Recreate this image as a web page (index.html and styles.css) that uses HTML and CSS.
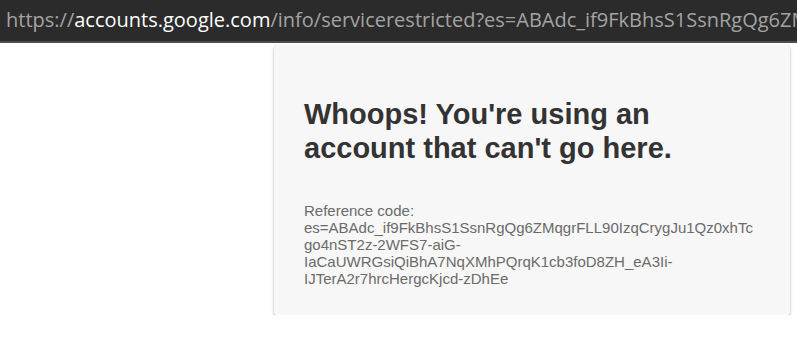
FILE: index.html
```html
<!DOCTYPE html>
<html>
<head>
<meta charset="utf-8">
<link rel="stylesheet" href="styles.css">
</head>
<body>
<div class="urlbar"><span class="dim">https://</span><span class="host">accounts.google.com</span><span class="dim">/info/servicerestricted?es=ABAdc_if9FkBhsS1SsnRgQg6ZMqgrFLL90IzqCrygJu1Qz0xhTcgo4nST2z</span></div>
<main class="page">
  <section class="card">
    <h1 class="title">Whoops! You're using an account that can't go here.</h1>
    <p class="ref">Reference code:<br>es=ABAdc_if9FkBhsS1SsnRgQg6ZMqgrFLL90IzqCrygJu1Qz0xhTcgo4nST2z-2WFS7-aiG-IaCaUWRGsiQiBhA7NqXMhPQrqK1cb3foD8ZH_eA3Ii-IJTerA2r7hrcHergcKjcd-zDhEe</p>
  </section>
</main>
</body>
</html>
```
FILE: styles.css
```css
html, body {
  margin: 0;
  padding: 0;
  background: #ffffff;
}
.urlbar {
  height: 41px;
  line-height: 40px;
  background: #2b2b2b;
  border-bottom: 2px solid #4e4e4e;
  font-family: "Open Sans", sans-serif;
  font-size: 20px;
  color: #a3a3a3;
  white-space: nowrap;
  overflow: hidden;
  padding-left: 6px;
}
.urlbar .host {
  color: #ffffff;
}
.page {
  display: flex;
  padding: 2px 0 0 274px;
}
.card {
  width: 456px;
  padding: 52px 30px 28px 30px;
  background: #f7f7f7;
  border-radius: 2px;
  box-shadow: 0 2px 3px rgba(0, 0, 0, 0.3), 0 0 1px rgba(0, 0, 0, 0.15);
}
.title {
  margin: 0 0 37px 0;
  font-family: "Liberation Sans", Arial, sans-serif;
  font-weight: bold;
  font-size: 29px;
  line-height: 34px;
  color: #333333;
}
.ref {
  margin: 0;
  font-family: "Liberation Sans", Arial, sans-serif;
  font-size: 15px;
  line-height: 17px;
  color: #6b6b6b;
  overflow-wrap: break-word;
}
```
